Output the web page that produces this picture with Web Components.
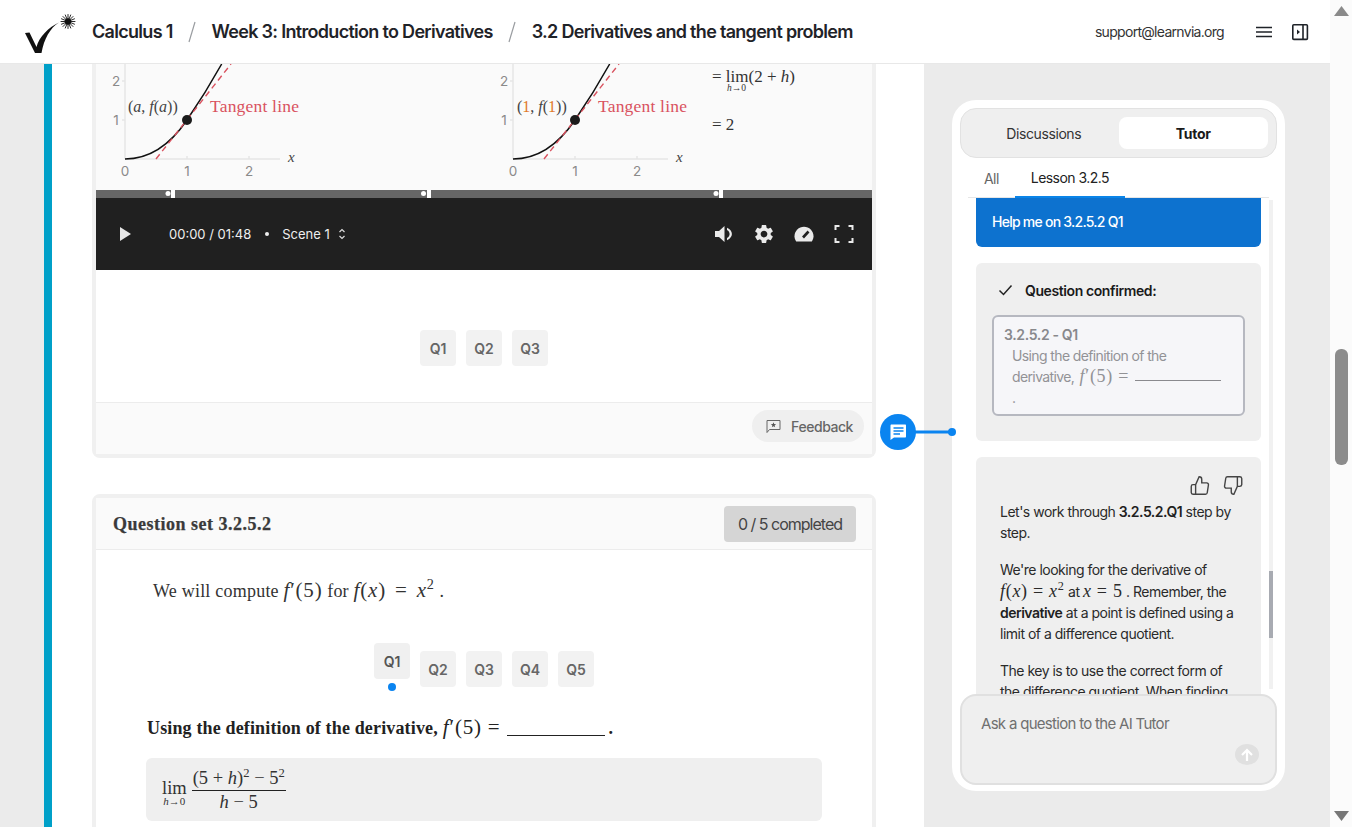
<!DOCTYPE html>
<html lang="en">
<head>
<meta charset="utf-8">
<title>3.2 Derivatives and the tangent problem</title>
<style>
  html, body { margin: 0; height: 100%; overflow: hidden; background: #ebebeb; }
  body { font-family: "Inter", "Liberation Sans", sans-serif; }
</style>
</head>
<body>
<learn-app></learn-app>
<script>
const SERIF = `"Liberation Serif", serif`;

class TopBar extends HTMLElement {
  constructor() {
    super();
    this.attachShadow({ mode: 'open' });
    this.shadowRoot.innerHTML = `
      <style>
        :host { display: flex; align-items: center; height: 64px; box-sizing: border-box; background: #fff; border-bottom: 1px solid #e8e8e8; padding: 0 21px 0 24px; color: #1f2328; }
        .logo { width: 54px; height: 44px; margin-right: 14px; flex: none; }
        .crumb { font-size: 18px; font-weight: 600; letter-spacing: -0.7px; white-space: nowrap; }
        .sep { width: 8px; height: 22px; margin: 0 16px 0 15px; flex: none; }
        .mail { margin-left: auto; font-size: 14px; letter-spacing: -0.7px; color: #333; }
        .menu { margin-left: 31px; width: 18px; height: 12px; }
        .dock { margin-left: 18px; width: 18px; height: 18px; }
      </style>
      <svg class="logo" viewBox="24 6 54 44">
        <path d="M25 29 L29.500 28.500 L36.500 43 C39 33 49 23 59 18.500 C50 24 44 35 41.500 49 L35 49 Z" fill="#111"/>
        <path d="M68 10.500V24.500M61 17.500H75M63 12.500L73 22.500M73 12.500L63 22.500M65.300 11L70.700 24M70.700 11L65.300 24M61.500 14.800L74.500 20.200M74.500 14.800L61.500 20.200" stroke="#111" stroke-width=".9" stroke-linecap="round"/>
        <circle cx="68" cy="17.500" r="3.200" fill="#111"/>
      </svg>
      <span class="crumb">Calculus 1</span>
      <svg class="sep" viewBox="0 0 8 22"><path d="M7 1L1 21" stroke="#9a9da1" stroke-width="1.200"/></svg>
      <span class="crumb">Week 3: Introduction to Derivatives</span>
      <svg class="sep" viewBox="0 0 8 22"><path d="M7 1L1 21" stroke="#9a9da1" stroke-width="1.200"/></svg>
      <span class="crumb">3.2 Derivatives and the tangent problem</span>
      <span class="mail">support@learnvia.org</span>
      <svg class="menu" viewBox="0 0 18 12"><path d="M1 1.500H17M1 6H17M1 10.500H17" stroke="#1f2328" stroke-width="1.700"/></svg>
      <svg class="dock" viewBox="0 0 18 18">
        <rect x="1.800" y="1.800" width="14.600" height="14.600" rx="1" fill="none" stroke="#1f2328" stroke-width="1.600"/>
        <path d="M12 2V16" stroke="#1f2328" stroke-width="1.600"/>
        <path d="M6 6.500L9 9L6 11.500Z" fill="#1f2328"/>
      </svg>
    `;
  }
}
customElements.define('top-bar', TopBar);

class SceneGraph extends HTMLElement {
  constructor() {
    super();
    this.attachShadow({ mode: 'open' });
    this.shadowRoot.innerHTML = `
      <style>
        :host { display: block; height: 126px; background: #fafafa; }
        svg { display: block; width: 776px; height: 126px; }
        .tick { font: 13.500px "Inter", sans-serif; fill: #8a8a8a; text-anchor: middle; }
        .lab { font: 16px ${SERIF}; fill: #444; }
        .tan { font: 17.500px ${SERIF}; fill: #d9525f; letter-spacing: .2px; }
        .x { font: italic 15px ${SERIF}; fill: #444; }
        .eq { font: 17px ${SERIF}; fill: #333; }
        .sub { font: 9.500px ${SERIF}; fill: #333; }
      </style>
      <svg viewBox="96 64 776 126">
        <defs>
          <g id="plot">
            <path d="M125 64V159M125 159H280M187 156V159M249 156V159M122 120H125M122 81H125" stroke="#e6e6e6" stroke-width="1.500" fill="none"/>
            <path d="M125 159C150 159 170 145 187 120C198 104 210 85 221.700 64" fill="none" stroke="#111" stroke-width="1.500"/>
            <path d="M156 159L231 64" stroke="#d9525f" stroke-width="1.400" stroke-dasharray="6 4" fill="none"/>
            <circle cx="187" cy="120" r="5" fill="#1b1b1b"/>
            <text class="tick" x="116" y="86">2</text>
            <text class="tick" x="116" y="125">1</text>
            <text class="tick" x="125" y="176">0</text>
            <text class="tick" x="187" y="176">1</text>
            <text class="tick" x="249" y="176">2</text>
            <text class="x" x="288" y="162">x</text>
            <text class="tan" x="210" y="112">Tangent line</text>
          </g>
        </defs>
        <use href="#plot"/>
        <use href="#plot" x="388"/>
        <text class="lab" x="128" y="112">(<tspan font-style="italic">a</tspan>, <tspan font-style="italic">f</tspan>(<tspan font-style="italic">a</tspan>))</text>
        <text class="lab" x="517" y="112">(<tspan fill="#e0782b">1</tspan>, <tspan font-style="italic">f</tspan>(<tspan fill="#e0782b">1</tspan>))</text>
        <text class="eq" x="712" y="82">= lim(2 + <tspan font-style="italic">h</tspan>)</text>
        <text class="sub" x="727" y="91"><tspan font-style="italic">h</tspan>→0</text>
        <text class="eq" x="712" y="130">= 2</text>
      </svg>
    `;
  }
}
customElements.define('scene-graph', SceneGraph);

class PlayerBar extends HTMLElement {
  constructor() {
    super();
    this.attachShadow({ mode: 'open' });
    this.shadowRoot.innerHTML = `
      <style>
        :host { display: block; background: #202020; color: #eee; font-size: 13px; }
        .track { display: block; width: 776px; height: 8px; }
        .row { display: flex; align-items: center; height: 72px; padding-left: 24px; }
        .play { width: 11px; height: 14px; margin-right: 38px; }
        .bullet { width: 4px; height: 4px; border-radius: 50%; background: #eee; margin: 0 13px 0 14px; }
        .updn { width: 8px; height: 14px; margin-left: 8px; }
        .tools { margin-left: auto; display: flex; align-items: center; gap: 20px; padding-right: 18px; }
        .tools svg { width: 20px; height: 20px; display: block; fill: #eaeaea; }
      </style>
      <svg class="track" viewBox="0 0 776 8">
        <rect width="776" height="8" fill="#666"/>
        <rect x="75" width="4" height="8" fill="#fff"/><circle cx="72" cy="3.500" r="2.500" fill="#fff"/>
        <rect x="331" width="4" height="8" fill="#fff"/><circle cx="327.500" cy="3.500" r="2.500" fill="#fff"/>
        <rect x="623" width="4" height="8" fill="#fff"/><circle cx="620" cy="3.500" r="2.500" fill="#fff"/>
      </svg>
      <div class="row">
        <svg class="play" viewBox="0 0 11 14"><path d="M0 0L11 7L0 14Z" fill="#e6e6e6"/></svg>
        <span>00:00 / 01:48</span>
        <span class="bullet"></span>
        <span>Scene 1</span>
        <svg class="updn" viewBox="0 0 8 14"><path d="M1.500 5L4 2.500L6.500 5M1.500 9L4 11.500L6.500 9" fill="none" stroke="#ddd" stroke-width="1.200"/></svg>
        <div class="tools">
          <svg viewBox="0 0 20 20"><path d="M1 7V13H5L10.500 18V2L5 7Z"/><path d="M13 3.800C16.400 5.400 17.900 7.700 17.900 10C17.900 12.300 16.400 14.600 13 16.200L13 14C14.800 13 15.600 11.500 15.600 10C15.600 8.500 14.800 7 13 6Z"/></svg>
          <svg viewBox="0 0 24 24"><path d="M19.140 12.940c.04-.3.06-.61.06-.94 0-.32-.02-.64-.07-.94l2.030-1.580a.49.49 0 0 0 .12-.61l-1.920-3.320a.488.488 0 0 0-.59-.22l-2.390.96c-.5-.38-1.030-.7-1.620-.94l-.36-2.540a.484.484 0 0 0-.48-.41h-3.840c-.24 0-.43.17-.47.41l-.36 2.540c-.59.24-1.130.57-1.620.94l-2.390-.96c-.22-.08-.47 0-.59.22L2.740 8.870c-.12.21-.08.47.12.61l2.030 1.580c-.05.3-.09.63-.09.94s.02.64.07.94l-2.030 1.580a.49.49 0 0 0-.12.61l1.920 3.320c.12.22.37.29.59.22l2.390-.96c.5.38 1.030.7 1.620.94l.36 2.540c.05.24.24.41.48.41h3.840c.24 0 .44-.17.47-.41l.36-2.540c.59-.24 1.130-.56 1.620-.94l2.390.96c.22.08.47 0 .59-.22l1.920-3.320c.12-.22.07-.47-.12-.61l-2.010-1.580zM12 15.600c-1.980 0-3.600-1.620-3.600-3.600s1.620-3.600 3.600-3.600 3.600 1.620 3.600 3.600-1.620 3.600-3.600 3.600z" transform="translate(-1.500 -1.500) scale(1.125)"/></svg>
          <svg viewBox="0 0 20 20"><path d="M2.200 17.500C1.200 16 .5 14.200 .5 12.200 .5 7 4.800 2.800 10 2.800S19.500 7 19.500 12.200C19.500 14.200 18.800 16 17.800 17.500Z"/><path d="M9 13.500L14.500 7.500" stroke="#202020" stroke-width="2.600"/></svg>
          <svg viewBox="0 0 20 20" style="fill:none"><path d="M1.500 6V2H5.500M14.500 2H18.500V6M18.500 14V18H14.500M5.500 18H1.500V14" stroke="#eaeaea" stroke-width="2"/></svg>
        </div>
      </div>
    `;
  }
}
customElements.define('player-bar', PlayerBar);

class QNav extends HTMLElement {
  connectedCallback() {
    if (this.shadowRoot) return;
    this.attachShadow({ mode: 'open' });
    const count = Number(this.getAttribute('count'));
    const active = Number(this.getAttribute('active') || 0);
    let items = '';
    for (let i = 1; i <= count; i++) {
      items += `<div class="item ${i === active ? 'on' : ''}"><div class="q">Q${i}</div>${i === active ? '<i></i>' : ''}</div>`;
    }
    this.shadowRoot.innerHTML = `
      <style>
        :host { display: flex; justify-content: center; align-items: flex-start; gap: 10px; font-family: "Inter", sans-serif; }
        .item { margin-top: 8px; }
        .item.on { margin-top: 0; }
        :host([flat]) .item { margin-top: 0; }
        .q { width: 36px; height: 36px; border-radius: 4px; background: #f2f2f2; color: #666; font-size: 14px; font-weight: 600; display: flex; align-items: center; justify-content: center; }
        .on .q { background: #f0f0f0; color: #555; }
        i { display: block; width: 8px; height: 8px; border-radius: 50%; background: #0a84f0; margin: 4px auto 0; }
      </style>
      ${items}
    `;
  }
}
customElements.define('q-nav', QNav);

class VideoCard extends HTMLElement {
  constructor() {
    super();
    this.attachShadow({ mode: 'open' });
    this.shadowRoot.innerHTML = `
      <style>
        :host { display: block; border: 4px solid #f0f0f0; border-top: 0; border-radius: 0 0 8px 8px; background: #fff; }
        .stage { height: 132px; box-sizing: border-box; padding-top: 60px; }
        .foot { height: 52px; box-sizing: border-box; background: #fafafa; border-top: 1px solid #ececec; display: flex; align-items: center; justify-content: flex-end; padding: 0 8px 5px 0; }
        .fb { display: flex; align-items: center; gap: 10px; height: 32px; padding: 0 11px 0 14px; border-radius: 16px; background: #efefef; color: #666; font-size: 14px; font-weight: 500; letter-spacing: -0.45px; }
        .fb svg { width: 15px; height: 15px; }
      </style>
      <scene-graph></scene-graph>
      <player-bar></player-bar>
      <div class="stage"><q-nav count="3" flat></q-nav></div>
      <div class="foot">
        <div class="fb">
          <svg viewBox="0 0 15 15"><path d="M1 13.500V1.500H14V10.500H3.500Z" fill="none" stroke="#666" stroke-width="1"/><path d="M7.500 3.300L8.200 5.100L10.100 5.200L8.600 6.400L9.100 8.200L7.500 7.200L5.900 8.200L6.400 6.400L4.900 5.200L6.800 5.100Z" fill="#555"/></svg>
          <span>Feedback</span>
        </div>
      </div>
    `;
  }
}
customElements.define('video-card', VideoCard);

class QuestionCard extends HTMLElement {
  constructor() {
    super();
    this.attachShadow({ mode: 'open' });
    this.shadowRoot.innerHTML = `
      <style>
        :host { display: block; border: 4px solid #f0f0f0; border-radius: 8px 8px 0 0; background: #fff; font-family: ${SERIF}; color: #333; padding-bottom: 60px; }
        header { height: 52px; box-sizing: border-box; background: #fafafa; border-bottom: 1px solid #ececec; display: flex; align-items: center; justify-content: space-between; padding: 1px 16px 0 17px; }
        h2 { margin: 1px 0 0; font-size: 18px; font-weight: 600; -webkit-text-stroke: .25px #3a3a3a; color: #3a3a3a; letter-spacing: .5px; }
        .badge { display: flex; align-items: center; justify-content: center; width: 132px; height: 36px; border-radius: 4px; background: #d5d5d5; color: #444; font: 16px "Inter", sans-serif; letter-spacing: -1px; }
        .intro { height: 30px; margin: 25px 0 0 57px; font-size: 18px; line-height: 30px; letter-spacing: .22px; white-space: nowrap; }
        .m { font-size: 21px; letter-spacing: .8px; word-spacing: 3px; }
        .m i { font-style: italic; }
        q-nav { margin-top: 38px; }
        .ask { margin: 21px 0 0 51px; font-size: 18px; font-weight: 700; line-height: 30px; color: #222; display: flex; align-items: baseline; letter-spacing: .15px; }
        .ask .m { font-weight: 400; margin-left: 5px; word-spacing: 0; }
        .blank { display: inline-block; width: 98px; height: 1px; background: #222; margin: 0 3px 0 7px; align-self: flex-end; transform: translateY(-7px); }
        .hint { margin: 15px 50px 0; height: 63px; box-sizing: border-box; border-radius: 6px; background: #efefef; display: flex; align-items: center; padding-left: 16px; gap: 5px; font-size: 18.500px; color: #333; }
        .lim { display: flex; flex-direction: column; align-items: center; line-height: 16px; padding-top: 8px; }
        .lim small { font-size: 11px; line-height: 11px; }
        .frac { display: flex; flex-direction: column; align-items: center; line-height: 22px; }
        .frac span:first-child { border-bottom: 1px solid #222; padding: 0 1px 1px; }
        sup { font-size: .68em; line-height: 0; }
      </style>
      <header><h2>Question set 3.2.5.2</h2><div class="badge">0 / 5 completed</div></header>
      <div class="intro">We will compute <span class="m"><i>f</i>′(5)</span> for <span class="m"><i>f</i>(<i>x</i>) = <i>x</i><sup>2</sup></span> .</div>
      <q-nav count="5" active="1"></q-nav>
      <div class="ask"><span>Using the definition of the derivative,</span><span class="m"><i>f</i>′(5) =</span><span class="blank"></span><span>.</span></div>
      <div class="hint">
        <div class="lim"><span>lim</span><small><i>h</i>→0</small></div>
        <div class="frac"><span>(5 + <i>h</i>)<sup>2</sup> − 5<sup>2</sup></span><span><i>h</i> − 5</span></div>
      </div>
    `;
  }
}
customElements.define('question-card', QuestionCard);

class TutorPanel extends HTMLElement {
  constructor() {
    super();
    this.attachShadow({ mode: 'open' });
    this.shadowRoot.innerHTML = `
      <style>
        :host { display: flex; flex-direction: column; height: 100%; box-sizing: border-box; background: #fff; border-radius: 24px; padding: 8px 8px 6px; color: #222; font-size: 14px; }
        .seg { flex: none; height: 50px; box-sizing: border-box; border: 1px solid #e2e2e2; border-radius: 16px; background: #efefef; display: flex; align-items: center; padding: 0 8px; }
        .seg span { flex: 1; height: 32px; display: flex; align-items: center; justify-content: center; color: #333; letter-spacing: -0.4px; }
        .seg .on { background: #fff; border-radius: 8px; font-weight: 700; color: #1a1a1a; letter-spacing: -0.3px; }
        .sub { flex: none; height: 40px; margin: 0 8px; box-sizing: border-box; border-bottom: 1px solid #e6e6e6; display: flex; }
        .sub span { display: flex; align-items: center; height: 40px; box-sizing: border-box; padding: 0 16px; letter-spacing: -0.55px; }
        .sub .all { color: #666; }
        .sub .cur { color: #222; border-bottom: 2px solid #0a84e8; }
        .scroll { flex: 1; min-height: 0; overflow: hidden; display: flex; padding-left: 16px; gap: 8px; }
        .msgs { width: 285px; flex: none; display: flex; flex-direction: column; gap: 16px; }
        .ask { flex: none; height: 49px; box-sizing: border-box; background: #0d72cf; color: #fff; border-radius: 0 0 6px 6px; display: flex; align-items: center; padding: 0 0 3px 16px; letter-spacing: -0.75px; font-weight: 500; }
        .box { flex: none; background: #efefef; border-radius: 6px; }
        .confirm { height: 178px; box-sizing: border-box; padding: 16px 16px 0; }
        .head { display: flex; align-items: center; height: 22px; font-weight: 600; letter-spacing: -0.4px; color: #1a1a1a; padding-left: 6px; }
        .head svg { width: 15px; height: 12px; margin-right: 12px; }
        .quote { margin-top: 14px; height: 101px; box-sizing: border-box; border: 2px solid #b6b8c0; border-radius: 6px; background: #f6f6f9; padding: 8px 10px; color: #929296; line-height: 20.500px; letter-spacing: -0.62px; }
        .quote b { display: block; font-weight: 600; color: #88888c; letter-spacing: -0.35px; }
        .quote div { padding-left: 8px; white-space: nowrap; }
        .quote .m { font: 18px ${SERIF}; letter-spacing: .7px; margin-left: 2px; }
        .quote u { display: inline-block; width: 86px; height: 1px; background: #8a8a8e; vertical-align: 1px; margin-left: 6px; }
        .reply { padding: 18px 17px 0 24px; line-height: 21.300px; letter-spacing: -0.5px; color: #2a2a2a; }
        .rate { display: flex; justify-content: flex-end; gap: 11px; height: 20px; margin-bottom: 6px; }
        .rate svg { width: 22px; height: 21px; fill: none; stroke: #444; stroke-width: 1.600; }
        p { margin: 0 0 15.700px; }
        p b { font-weight: 600; color: #1f1f1f; }
        .m { font: 18px ${SERIF}; letter-spacing: .7px; }
        .m sup { font-size: .68em; line-height: 0; }
        .rail { width: 3.500px; flex: none; height: 489px; margin-top: 2px; background: #f1f1f1; }
        .rail i { display: block; height: 67px; margin-top: 371px; background: #a8abb2; }
        .input { flex: none; height: 91px; box-sizing: border-box; border: 2px solid #e0e0e0; border-radius: 16px; background: #efefef; padding: 18px 19px; font-size: 15px; letter-spacing: -0.7px; color: #707070; display: flex; flex-direction: column; }
        .send { align-self: flex-end; width: 24px; height: 24px; margin: 11px -3px 0 0; border-radius: 50%; background: #e0e0e0; display: flex; align-items: center; justify-content: center; }
        .send svg { width: 14px; height: 14px; }
      </style>
      <div class="seg"><span>Discussions</span><span class="on">Tutor</span></div>
      <div class="sub"><span class="all">All</span><span class="cur">Lesson 3.2.5</span></div>
      <div class="scroll">
        <div class="msgs">
          <div class="ask">Help me on 3.2.5.2 Q1</div>
          <div class="box confirm">
            <div class="head"><svg viewBox="0 0 15 12"><path d="M1.500 6.500L5.500 10.500L13.500 1.500" fill="none" stroke="#222" stroke-width="1.500"/></svg>Question confirmed:</div>
            <div class="quote"><b>3.2.5.2 - Q1</b><div>Using the definition of the<br>derivative, <span class="m"><i>f</i>′(5) =</span><u></u><br>.</div></div>
          </div>
          <div class="box reply">
            <div class="rate">
              <svg viewBox="0 0 24 24"><path d="M14 9V5a3 3 0 0 0-3-3l-4 9v11h11.280a2 2 0 0 0 2-1.700l1.380-9a2 2 0 0 0-2-2.300zM7 22H4a2 2 0 0 1-2-2v-7a2 2 0 0 1 2-2h3"/></svg>
              <svg viewBox="0 0 24 24"><path d="M10 15v4a3 3 0 0 0 3 3l4-9V2H5.720a2 2 0 0 0-2 1.700l-1.380 9a2 2 0 0 0 2 2.300zm7-13h2.670A2.310 2.310 0 0 1 22 4v7a2.310 2.310 0 0 1-2.330 2H17"/></svg>
            </div>
            <p>Let's work through <b>3.2.5.2.Q1</b> step by step.</p>
            <p>We're looking for the derivative of<br><span class="m"><i>f</i>(<i>x</i>) = <i>x</i><sup>2</sup></span> at <span class="m"><i>x</i> = 5</span> . Remember, the <b>derivative</b> at a point is defined using a limit of a difference quotient.</p>
            <p>The key is to use the correct form of the difference quotient. When finding</p>
          </div>
        </div>
        <div class="rail"><i></i></div>
      </div>
      <div class="input">
        <span>Ask a question to the AI Tutor</span>
        <div class="send"><svg viewBox="0 0 14 14"><path d="M7 13V2M2 7L7 2L12 7" fill="none" stroke="#fff" stroke-width="2.200"/></svg></div>
      </div>
    `;
  }
}
customElements.define('tutor-panel', TutorPanel);

class PageScrollbar extends HTMLElement {
  constructor() {
    super();
    this.attachShadow({ mode: 'open' });
    this.shadowRoot.innerHTML = `
      <style>
        :host { display: flex; flex-direction: column; align-items: center; flex: none; width: 22px; height: 827px; box-sizing: border-box; background: #fbfbfb; padding: 6px 0; }
        svg { width: 15px; height: 10px; flex: none; }
        i { display: block; width: 13px; height: 116px; margin-top: 333px; border-radius: 6px; background: #8c8c8c; }
        .down { margin-top: auto; }
      </style>
      <svg viewBox="0 0 15 10"><path d="M7.500 0L15 10H0Z" fill="#8a8a8a"/></svg>
      <i></i>
      <svg class="down" viewBox="0 0 15 10"><path d="M7.500 10L15 0H0Z" fill="#777"/></svg>
    `;
  }
}
customElements.define('page-scrollbar', PageScrollbar);

class ChatFab extends HTMLElement {
  constructor() {
    super();
    this.attachShadow({ mode: 'open' });
    this.shadowRoot.innerHTML = `
      <style>
        :host { position: absolute; left: 880px; top: 414px; width: 77px; height: 37px; display: block; }
        svg { display: block; width: 77px; height: 37px; }
      </style>
      <svg viewBox="0 0 77 37">
        <path d="M34 18H72" stroke="#0a84f0" stroke-width="3"/>
        <circle cx="72" cy="18" r="4" fill="#0a84f0"/>
        <circle cx="18" cy="18" r="18" fill="#0a84f0"/>
        <path d="M11.500 10.500H25C25.800 10.500 26 11 26 11.500V22.500C26 23 25.800 23.500 25 23.500H14L10.500 26V11.500C10.500 11 10.800 10.500 11.500 10.500Z" fill="#fff"/>
        <path d="M13.500 14H23.500M13.500 17H23.500M13.500 20H20" stroke="#0a84f0" stroke-width="1.300"/>
      </svg>
    `;
  }
}
customElements.define('chat-fab', ChatFab);

class LearnApp extends HTMLElement {
  constructor() {
    super();
    this.attachShadow({ mode: 'open' });
    this.shadowRoot.innerHTML = `
      <style>
        :host { display: flex; width: 1352px; height: 827px; position: relative; overflow: hidden; background: #ebebeb; }
        .main { flex: 1; min-width: 0; display: flex; flex-direction: column; }
        .body { flex: 1; min-height: 0; display: flex; }
        .gutter { width: 44px; flex: none; }
        .lesson { width: 880px; flex: none; box-sizing: border-box; background: #fff; border-left: 8px solid #00a0c8; padding: 0 48px 0 40px; overflow: hidden; }
        question-card { margin-top: 36px; }
        .side { flex: 1; min-width: 0; box-sizing: border-box; padding: 36px 45px 36px 28px; }
      </style>
      <div class="main">
        <top-bar></top-bar>
        <div class="body">
          <div class="gutter"></div>
          <div class="lesson">
            <video-card></video-card>
            <question-card></question-card>
          </div>
          <div class="side"><tutor-panel></tutor-panel></div>
        </div>
      </div>
      <page-scrollbar></page-scrollbar>
      <chat-fab></chat-fab>
    `;
  }
}
customElements.define('learn-app', LearnApp);
</script>
</body>
</html>
